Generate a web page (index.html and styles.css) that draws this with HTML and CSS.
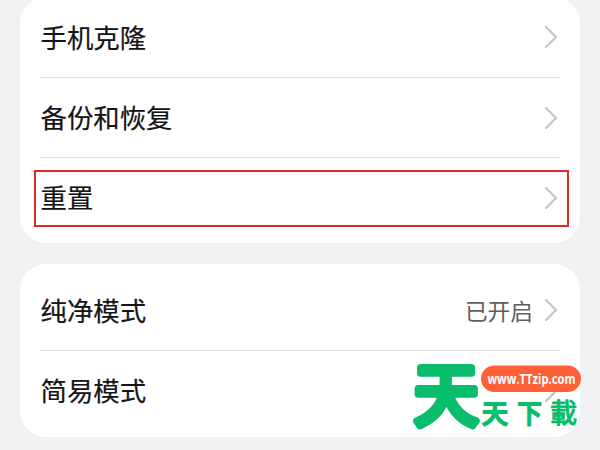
FILE: index.html
```
<!DOCTYPE html>
<html lang="zh-CN">
<head>
<meta charset="utf-8">
<title>系统和更新</title>
<link rel="stylesheet" href="styles.css">
</head>
<body>
<main class="settings">
  <section class="card card-top">
    <div class="row"><span class="label">手机克隆</span><svg class="chevron" viewBox="0 0 14 24"><path d="M2 2L12 12L2 22"/></svg></div>
    <div class="row"><span class="label">备份和恢复</span><svg class="chevron" viewBox="0 0 14 24"><path d="M2 2L12 12L2 22"/></svg></div>
    <div class="row highlighted"><span class="label">重置</span><svg class="chevron" viewBox="0 0 14 24"><path d="M2 2L12 12L2 22"/></svg></div>
  </section>
  <section class="card card-modes">
    <div class="row"><span class="label">纯净模式</span><span class="value">已开启</span><svg class="chevron" viewBox="0 0 14 24"><path d="M2 2L12 12L2 22"/></svg></div>
    <div class="row"><span class="label">简易模式</span><svg class="chevron" viewBox="0 0 14 24"><path d="M2 2L12 12L2 22"/></svg></div>
  </section>
</main>
<svg class="watermark" viewBox="0 -20 190 115">
  <text class="mark" transform="translate(4.1 64.8) scale(0.96 1.02)">天</text>
  <rect class="pill" x="71" y="10.5" width="100" height="26.5" rx="13.25"/>
  <text class="site" x="77.5" y="29" textLength="88" lengthAdjust="spacingAndGlyphs">www.TTzip.com</text>
  <text class="name" x="72" y="67.5">天</text>
  <text class="name" transform="translate(107.5 67.5) scale(0.93 1)">下</text>
  <text class="name dense" x="140" y="68">載</text>
</svg>
</body>
</html>
```
FILE: styles.css
```
body {
  margin: 0;
  height: 450px;
  overflow: hidden;
  background: #f1f2f4;
  font-family: "Noto Sans CJK SC", sans-serif;
}
.settings {
  display: flex;
  flex-direction: column;
  gap: 21px;
  margin: -3px 20px 0;
}
.card {
  box-sizing: border-box;
  padding: 0 20px;
  border-radius: 26px;
  background: #fff;
}
.card-top {
  height: 246px;
}
.card-modes {
  height: 173px;
  padding-top: 6px;
}
.row {
  position: relative;
  box-sizing: border-box;
  display: flex;
  align-items: center;
  height: 80px;
}
.row + .row {
  border-top: 1px solid #e1e1e1;
}
.label {
  flex: 1;
  padding: 0 0 1px 0.5px;
  color: #151515;
  font-size: 26.4px;
  line-height: 40px;
  -webkit-text-stroke: 0.2px #151515;
}
.value {
  margin-right: 11px;
  padding-top: 2px;
  color: #5f5f5f;
  font-size: 22.7px;
  line-height: 34px;
}
.chevron {
  width: 14px;
  height: 24px;
  margin-right: 2px;
  fill: none;
  stroke: #c5c5c5;
  stroke-width: 2.2;
  stroke-linecap: round;
}
.highlighted::after {
  content: "";
  position: absolute;
  inset: 12px -9px 10px -6px;
  border: 2px solid #dc2b2b;
}
.watermark {
  position: absolute;
  left: 410px;
  top: 335px;
  width: 190px;
  height: 115px;
}
.mark,
.name {
  fill: #08bd6b;
  stroke: #08bd6b;
  stroke-linejoin: round;
  font-family: "Noto Sans CJK TC", sans-serif;
  font-weight: 400;
}
.mark {
  font-size: 67px;
  stroke-width: 7.5;
}
.name {
  font-size: 26px;
  stroke-width: 2.2;
}
.dense {
  font-size: 27px;
  stroke-width: 1.1;
}
.pill {
  fill: #ff6038;
}
.site {
  fill: #fff;
  font-family: "Open Sans", sans-serif;
  font-size: 13.5px;
  font-weight: 700;
}
```
